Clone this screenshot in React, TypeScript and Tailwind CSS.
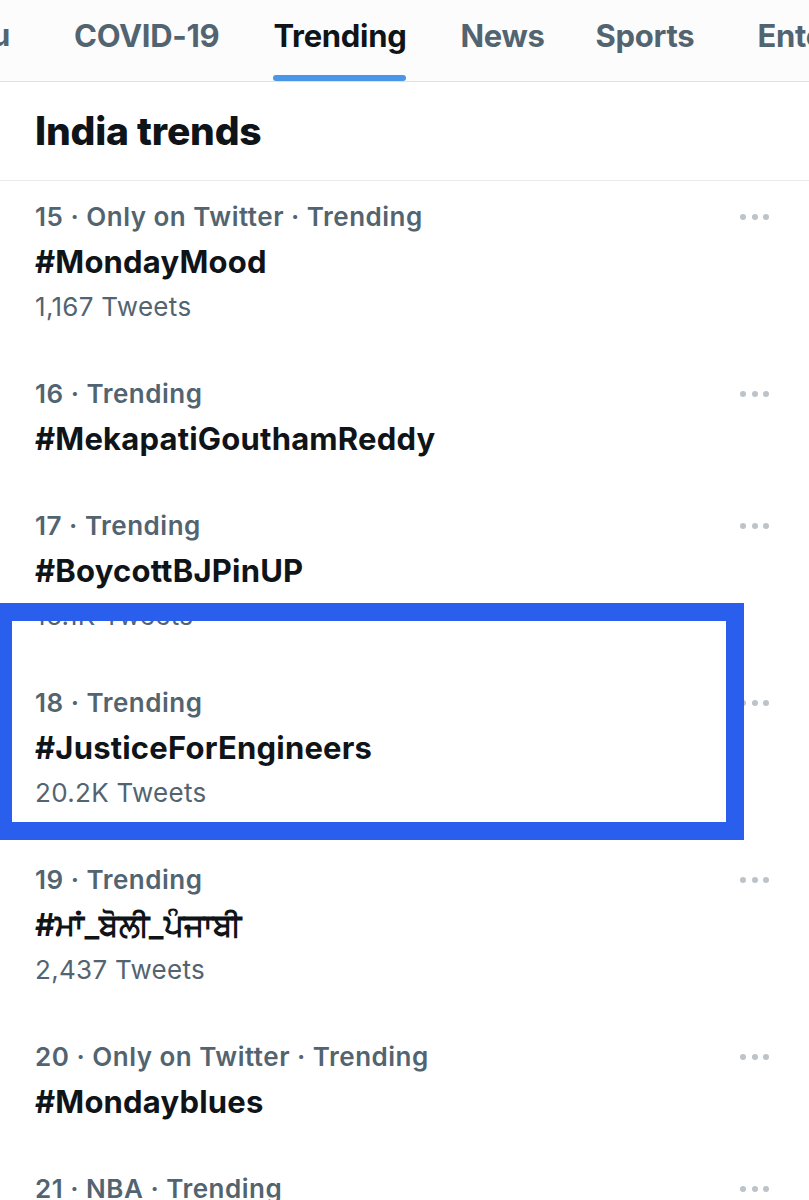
const tabs = [
  { label: 'COVID-19', active: false, extra: '' },
  { label: 'Trending', active: true, extra: '' },
  { label: 'News', active: false, extra: '' },
  { label: 'Sports', active: false, extra: 'ml-[-3px]' },
  { label: 'Entertainment', active: false, extra: 'ml-[9px]' }
]

const trends = [
  { rank: 15, context: 'Only on Twitter · Trending', tag: '#MondayMood', tweets: '1,167 Tweets' },
  { rank: 16, context: 'Trending', tag: '#MekapatiGouthamReddy', tweets: null },
  { rank: 17, context: 'Trending', tag: '#BoycottBJPinUP', tweets: '16.1K Tweets' },
  { rank: 18, context: 'Trending', tag: '#JusticeForEngineers', tweets: '20.2K Tweets' },
  { rank: 19, context: 'Trending', tag: '#ਮਾਂ_ਬੋਲੀ_ਪੰਜਾਬੀ', tweets: '2,437 Tweets' },
  { rank: 20, context: 'Only on Twitter · Trending', tag: '#Mondayblues', tweets: null },
  { rank: 21, context: 'NBA · Trending', tag: '#NBA', tweets: null }
]

function MoreDots() {
  return (
    <div className="flex items-center gap-[5.5px] h-[45px]">
      <span className="w-[6px] h-[6px] rounded-full bg-[#bcc3c9]" />
      <span className="w-[6px] h-[6px] rounded-full bg-[#bcc3c9]" />
      <span className="w-[6px] h-[6px] rounded-full bg-[#bcc3c9]" />
    </div>
  )
}

export default function App() {
  return (
    <div
      className="relative w-[809px] h-[1200px] overflow-hidden bg-white"
      style={{ fontFamily: 'Inter, "Noto Sans", "DejaVu Sans", sans-serif' }}
    >
      {/* Tabs */}
      <div className="h-[82px] bg-[#fcfcfd] border-b border-[#dde2e5] overflow-hidden">
        <div className="flex h-full whitespace-nowrap text-[31px] font-bold tracking-[-0.3px]">
          <div className="w-[10px] shrink-0 flex justify-end pt-[13px] text-[#536471]">
            <span className="leading-[44px]">For you</span>
          </div>
          <div className="flex gap-[54px] ml-[64px]">
            {tabs.map((tab) => (
              <div key={tab.label} className={`relative h-full pt-[13px] shrink-0 ${tab.extra}`}>
                <span className={`leading-[44px] ${tab.active ? 'text-[#0f1419]' : 'text-[#536471]'}`}>
                  {tab.label}
                </span>
                {tab.active && (
                  <div className="absolute left-0 right-0 bottom-0 h-[6px] rounded-full bg-[#4a96e8]" />
                )}
              </div>
            ))}
          </div>
        </div>
      </div>

      {/* Heading */}
      <div className="h-[99px] flex items-center px-[35px] border-b border-[#e7eaec]">
        <h2 className="text-[39px] font-extrabold text-[#0f1419] tracking-[-0.2px] leading-[44px]">
          India trends
        </h2>
      </div>

      {/* Trend list */}
      <div>
        {trends.map((trend) => (
          <div key={trend.rank} className="flex justify-between pl-[35px] pr-[40px] pt-[13px] pb-[29px]">
            <div>
              <div className="text-[26px] leading-[45px] font-semibold text-[#536471] whitespace-nowrap tracking-[0.5px]">
                {trend.rank} · {trend.context}
              </div>
              <div className="text-[31px] leading-[45px] font-bold text-[#0f1419] whitespace-nowrap tracking-[0.2px]">
                {trend.tag}
              </div>
              {trend.tweets && (
                <div className="text-[26px] leading-[45px] text-[#536471] whitespace-nowrap tracking-[0.3px]">
                  {trend.tweets}
                </div>
              )}
            </div>
            <MoreDots />
          </div>
        ))}
      </div>

      {/* Highlight annotation */}
      <div className="absolute top-[603px] left-[-6px] w-[750px] h-[237px] border-[18px] border-[#2a5fee]" />
    </div>
  )
}
